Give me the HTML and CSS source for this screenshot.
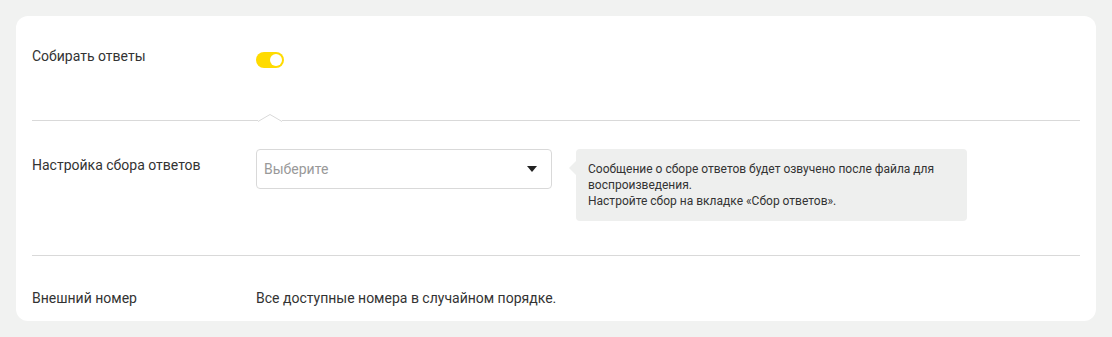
FILE: index.html
```html
<!DOCTYPE html>
<html lang="ru">
<head>
<meta charset="utf-8">
<link rel="stylesheet" href="styles.css">
</head>
<body>
<div class="card">
  <div class="row row-first">
    <div class="label">Собирать ответы</div>
    <div class="control">
      <span class="toggle"><span class="knob"></span></span>
    </div>
  </div>
  <div class="divider">
    <span class="seg seg-left"></span>
    <svg class="notch" width="24" height="8" viewBox="0 0 24 8"><polyline points="0,7.5 12,0.5 24,7.5" fill="#fff" stroke="#d9d9d9" stroke-width="1"/></svg>
    <span class="seg seg-right"></span>
  </div>
  <div class="row row-second">
    <div class="label label-offset">Настройка сбора ответов</div>
    <div class="control control-wide">
      <div class="select">
        <span class="placeholder">Выберите</span>
        <svg class="caret" width="10" height="6" viewBox="0 0 10 6"><path d="M0 0H10L5 6Z" fill="#222"/></svg>
      </div>
      <div class="hint">
        Сообщение о сборе ответов будет озвучено после файла для воспроизведения.<br>
        Настройте сбор на вкладке «Сбор ответов».
      </div>
    </div>
  </div>
  <div class="divider"><span class="seg seg-right"></span></div>
  <div class="row row-third">
    <div class="label">Внешний номер</div>
    <div class="value">Все доступные номера в случайном порядке.</div>
  </div>
</div>
</body>
</html>
```
FILE: styles.css
```css
* { box-sizing: border-box; }
html, body { margin: 0; }
body {
  background: #f1f2f1;
  padding: 16px;
  font-family: Roboto, "Noto Sans", sans-serif;
  color: #333;
  font-size: 14px;
  line-height: 20px;
}
.card {
  background: #fff;
  border-radius: 12px;
  padding: 0 16px 12px;
  height: 305px;
  overflow: hidden;
}
.row {
  display: flex;
  align-items: flex-start;
}
.row-first { padding: 30px 0 34px; height: 104px; }
.row-second { padding: 28px 0 34px; }
.row-third { padding: 32px 0 0; }
.label {
  width: 224px;
  flex: none;
  color: #333;
}
.label-offset { padding-top: 6px; }
.control { display: flex; align-items: flex-start; }
.toggle {
  margin-top: 6px;
  width: 28px;
  height: 16px;
  border-radius: 8px;
  background: #ffdb00;
  display: flex;
  justify-content: flex-end;
  align-items: center;
  padding: 0 2px;
}
.knob {
  width: 12px;
  height: 12px;
  border-radius: 50%;
  background: #fff;
}
.divider {
  display: flex;
  align-items: flex-end;
  height: 1px;
}
.seg { height: 1px; background: #d9d9d9; }
.seg-left { width: 226px; flex: none; }
.seg-right { flex: 1; }
.notch { flex: none; display: block; margin-bottom: -0.5px; }
.select {
  width: 296px;
  height: 40px;
  border: 1px solid #d9d9d9;
  border-radius: 4px;
  display: flex;
  align-items: center;
  justify-content: space-between;
  padding: 0 14px 0 7px;
}
.placeholder { color: #999; }
.caret { display: block; }
.hint {
  position: relative;
  margin-left: 24px;
  width: 391px;
  background: #eeefee;
  border-radius: 4px;
  padding: 12px;
  font-size: 12px;
  line-height: 16px;
  color: #333;
}
.hint::before {
  content: "";
  position: absolute;
  left: -7px;
  top: 12px;
  border-style: solid;
  border-width: 7px 7px 7px 0;
  border-color: transparent #eeefee transparent transparent;
}
.value { color: #333; }
```
